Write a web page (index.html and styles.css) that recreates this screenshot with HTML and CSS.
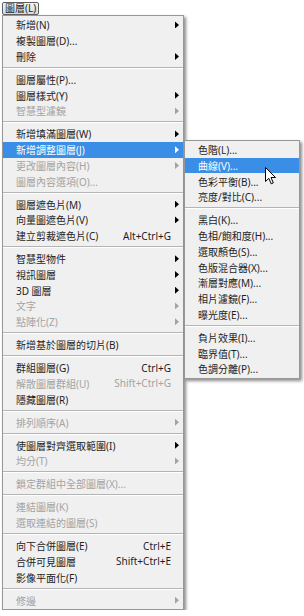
FILE: index.html
```html
<!DOCTYPE html>
<html lang="zh-Hant">
<head>
    <meta charset="UTF-8">
    <meta name="viewport" content="width=device-width, initial-scale=1.0">
    <title>圖層選單</title>
    <link rel="stylesheet" href="styles.css">
</head>
<body>
    <div class="menubar"><span class="menu-title">圖層(L)</span></div>
    <ul class="menu">
        <li class="item has-sub"><span class="label">新增(N)</span></li>
        <li class="item"><span class="label">複製圖層(D)...</span></li>
        <li class="item has-sub"><span class="label">刪除</span></li>
        <li class="sep"></li>
        <li class="item"><span class="label">圖層屬性(P)...</span></li>
        <li class="item has-sub"><span class="label">圖層樣式(Y)</span></li>
        <li class="item has-sub disabled"><span class="label">智慧型濾鏡</span></li>
        <li class="sep"></li>
        <li class="item has-sub"><span class="label">新增填滿圖層(W)</span></li>
        <li class="item has-sub active">
            <span class="label">新增調整圖層(J)</span>
            <ul class="menu submenu">
                <li class="item"><span class="label">色階(L)...</span></li>
                <li class="item active"><span class="label">曲線(V)...</span></li>
                <li class="item"><span class="label">色彩平衡(B)...</span></li>
                <li class="item"><span class="label">亮度/對比(C)...</span></li>
                <li class="sep"></li>
                <li class="item"><span class="label">黑白(K)...</span></li>
                <li class="item"><span class="label">色相/飽和度(H)...</span></li>
                <li class="item"><span class="label">選取顏色(S)...</span></li>
                <li class="item"><span class="label">色版混合器(X)...</span></li>
                <li class="item"><span class="label">漸層對應(M)...</span></li>
                <li class="item"><span class="label">相片濾鏡(F)...</span></li>
                <li class="item"><span class="label">曝光度(E)...</span></li>
                <li class="sep"></li>
                <li class="item"><span class="label">負片效果(I)...</span></li>
                <li class="item"><span class="label">臨界值(T)...</span></li>
                <li class="item"><span class="label">色調分離(P)...</span></li>
            </ul>
        </li>
        <li class="item has-sub disabled"><span class="label">更改圖層內容(H)</span></li>
        <li class="item disabled"><span class="label">圖層內容選項(O)...</span></li>
        <li class="sep"></li>
        <li class="item has-sub"><span class="label">圖層遮色片(M)</span></li>
        <li class="item has-sub"><span class="label">向量圖遮色片(V)</span></li>
        <li class="item"><span class="label">建立剪裁遮色片(C)</span><span class="key">Alt+Ctrl+G</span></li>
        <li class="sep"></li>
        <li class="item has-sub"><span class="label">智慧型物件</span></li>
        <li class="item has-sub"><span class="label">視訊圖層</span></li>
        <li class="item has-sub"><span class="label">3D 圖層</span></li>
        <li class="item has-sub disabled"><span class="label">文字</span></li>
        <li class="item has-sub disabled"><span class="label">點陣化(Z)</span></li>
        <li class="sep"></li>
        <li class="item"><span class="label">新增基於圖層的切片(B)</span></li>
        <li class="sep"></li>
        <li class="item"><span class="label">群組圖層(G)</span><span class="key">Ctrl+G</span></li>
        <li class="item disabled"><span class="label">解散圖層群組(U)</span><span class="key">Shift+Ctrl+G</span></li>
        <li class="item"><span class="label">隱藏圖層(R)</span></li>
        <li class="sep"></li>
        <li class="item has-sub disabled"><span class="label">排列順序(A)</span></li>
        <li class="sep"></li>
        <li class="item has-sub"><span class="label">使圖層對齊選取範圍(I)</span></li>
        <li class="item has-sub disabled"><span class="label">均分(T)</span></li>
        <li class="sep"></li>
        <li class="item disabled"><span class="label">鎖定群組中全部圖層(X)...</span></li>
        <li class="sep"></li>
        <li class="item disabled"><span class="label">連結圖層(K)</span></li>
        <li class="item disabled"><span class="label">選取連結的圖層(S)</span></li>
        <li class="sep"></li>
        <li class="item"><span class="label">向下合併圖層(E)</span><span class="key">Ctrl+E</span></li>
        <li class="item"><span class="label">合併可見圖層</span><span class="key">Shift+Ctrl+E</span></li>
        <li class="item"><span class="label">影像平面化(F)</span></li>
        <li class="sep"></li>
        <li class="item has-sub disabled"><span class="label">修邊</span></li>
    </ul>

    <!-- mouse pointer over the submenu -->
    <svg class="cursor" width="12" height="19" viewBox="0 0 12 19">
        <path d="M0.5 0.5 L0.5 14.5 L3.8 11.3 L6.2 16.8 L8.3 15.9 L6 10.5 L10.5 10.5 Z" fill="#fff" stroke="#000" stroke-width="1" stroke-linejoin="round"/>
    </svg>
</body>
</html>
```

FILE: styles.css
```css
body {
    margin: 0;
    padding: 1px 0 0 2px;
    background: #fff;
    font-family: "Noto Sans", "Noto Sans CJK TC", sans-serif;
    font-size: 10px;
    color: #1e1e1e;
}
.menubar {
    height: 14px;
}
.menu-title {
    display: inline-block;
    height: 11px;
    line-height: 11px;
    padding: 0 2px;
    border: 1px solid #5e5e5e;
    border-radius: 2px;
    background: linear-gradient(#f4f4f4, #d6d9de);
}
.menu {
    list-style: none;
    margin: 0;
    padding: 1px 0;
    width: 180px;
    background: #f0f0f0;
    border: 1px solid #979797;
    box-shadow: 2px 2px 3px rgba(0,0,0,0.45);
}
.item {
    position: relative;
    display: flex;
    align-items: center;
    height: 15.75px;
    padding: 0 4px 0 13px;
    white-space: nowrap;
}
.item .label {
    flex: 1;
}
.item .key {
    padding-right: 0;
}
.item::after {
    content: "";
    width: 8px;
    height: 7px;
    flex: none;
}
.has-sub::after {
    background: #000;
    clip-path: polygon(4px 0, 8px 3.5px, 4px 7px);
}
.disabled {
    color: #a3a3a3;
}
.has-sub.disabled::after {
    background: #a3a3a3;
}
.active {
    background: #3a8ee6;
    color: #fff;
}
.active.has-sub::after {
    background: #fff;
}
.sep {
    height: 1px;
    margin: 2.625px 0;
    background: #b4b4b4;
    border-bottom: 1px solid #fff;
}
.submenu {
    position: absolute;
    left: calc(100% + 1px);
    top: -2px;
    width: 114px;
    color: #1e1e1e;
}
.submenu .item {
    padding-right: 2px;
}
.submenu .active {
    color: #fff;
}
.cursor {
    position: absolute;
    left: 265px;
    top: 167px;
}
```
